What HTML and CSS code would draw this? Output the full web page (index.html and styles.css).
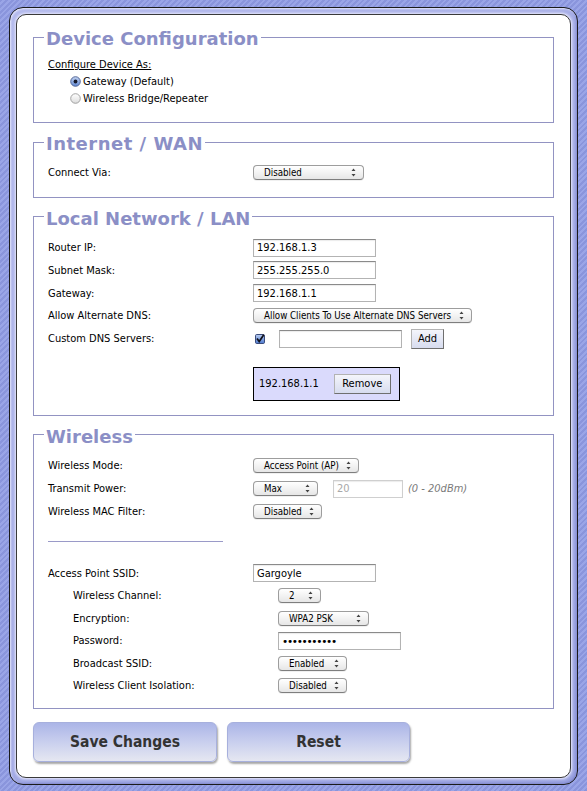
FILE: index.html
```html
<!DOCTYPE html>
<html>
<head>
<meta charset="utf-8">
<title>Gargoyle Settings</title>
<link rel="stylesheet" href="styles.css">
</head>
<body>
<svg class="defs" width="0" height="0" aria-hidden="true">
  <defs>
    <linearGradient id="radioOn" x1="0" y1="0" x2="0" y2="1">
      <stop offset="0" stop-color="#c4d4f2"/>
      <stop offset="1" stop-color="#5f87d2"/>
    </linearGradient>
    <linearGradient id="radioOff" x1="0" y1="0" x2="0" y2="1">
      <stop offset="0" stop-color="#ffffff"/>
      <stop offset="1" stop-color="#dcdcdc"/>
    </linearGradient>
    <linearGradient id="checkOn" x1="0" y1="0" x2="0" y2="1">
      <stop offset="0" stop-color="#b9cdf1"/>
      <stop offset="1" stop-color="#4f7bd0"/>
    </linearGradient>
    <symbol id="arrows" viewBox="0 0 5 9">
      <path d="M2.5 0.5 L4.5 3 H0.5 Z M0.5 6 H4.5 L2.5 8.5 Z" fill="#444"/>
    </symbol>
  </defs>
</svg>
<div class="frame">
  <div class="panel">

    <fieldset class="fs">
      <legend>Device Configuration</legend>
      <div class="fs-body body-device">
        <div class="sub-heading">Configure Device As:</div>
        <div class="radio-row">
          <svg class="radio" viewBox="0 0 11 11"><circle cx="5.5" cy="5.5" r="4.8" fill="url(#radioOn)" stroke="#4b5e8e" stroke-width="0.9"/><circle cx="5.5" cy="5.5" r="1.9" fill="#15192a"/></svg>
          <span>Gateway (Default)</span>
        </div>
        <div class="radio-row">
          <svg class="radio" viewBox="0 0 11 11"><circle cx="5.5" cy="5.5" r="4.8" fill="url(#radioOff)" stroke="#9a9a9a" stroke-width="0.9"/></svg>
          <span>Wireless Bridge/Repeater</span>
        </div>
      </div>
    </fieldset>

    <fieldset class="fs">
      <legend class="legend-wide">Internet / WAN</legend>
      <div class="fs-body body-wan">
        <div class="row">
          <span class="label">Connect Via:</span>
          <span class="sel w-wan"><span>Disabled</span><svg class="arr"><use href="#arrows"/></svg></span>
        </div>
      </div>
    </fieldset>

    <fieldset class="fs">
      <legend>Local Network / LAN</legend>
      <div class="fs-body body-lan">
        <div class="row">
          <span class="label">Router IP:</span>
          <input class="txt" type="text" value="192.168.1.3">
        </div>
        <div class="row">
          <span class="label">Subnet Mask:</span>
          <input class="txt" type="text" value="255.255.255.0">
        </div>
        <div class="row">
          <span class="label">Gateway:</span>
          <input class="txt" type="text" value="192.168.1.1">
        </div>
        <div class="row">
          <span class="label">Allow Alternate DNS:</span>
          <span class="sel w-dns"><span>Allow Clients To Use Alternate DNS Servers</span><svg class="arr"><use href="#arrows"/></svg></span>
        </div>
        <div class="row">
          <span class="label">Custom DNS Servers:</span>
          <span class="dns-ctrl">
            <svg class="check" viewBox="0 0 10 10"><rect x="0.5" y="0.5" width="9" height="9" rx="1.2" fill="url(#checkOn)" stroke="#3b4c7c"/><path d="M2 4.6 L4.2 7.6 L8.8 0.8" stroke="#101018" stroke-width="1.7" fill="none"/></svg>
            <input class="txt dns-input" type="text" value="">
            <button class="btn-small btn-add" type="button">Add</button>
          </span>
        </div>
        <div class="dns-list">
          <span>192.168.1.1</span>
          <button class="btn-small btn-remove" type="button">Remove</button>
        </div>
      </div>
    </fieldset>

    <fieldset class="fs fs-last">
      <legend>Wireless</legend>
      <div class="fs-body body-wifi">
        <div class="row">
          <span class="label">Wireless Mode:</span>
          <span class="sel w-mode"><span>Access Point (AP)</span><svg class="arr"><use href="#arrows"/></svg></span>
        </div>
        <div class="row">
          <span class="label">Transmit Power:</span>
          <span class="sel w-max"><span>Max</span><svg class="arr"><use href="#arrows"/></svg></span>
          <input class="txt txt-power" type="text" value="20" disabled>
          <em class="hint">(0 - 20dBm)</em>
        </div>
        <div class="row">
          <span class="label">Wireless MAC Filter:</span>
          <span class="sel w-mac"><span>Disabled</span><svg class="arr"><use href="#arrows"/></svg></span>
        </div>
        <div class="divider"></div>
        <div class="row row-ap">
          <span class="label">Access Point SSID:</span>
          <input class="txt" type="text" value="Gargoyle">
        </div>
        <div class="row row-ap sub">
          <span class="label">Wireless Channel:</span>
          <span class="sel w-ch"><span>2</span><svg class="arr"><use href="#arrows"/></svg></span>
        </div>
        <div class="row row-ap sub">
          <span class="label">Encryption:</span>
          <span class="sel w-enc"><span>WPA2 PSK</span><svg class="arr"><use href="#arrows"/></svg></span>
        </div>
        <div class="row row-ap sub">
          <span class="label">Password:</span>
          <input class="txt txt-pass" type="password" value="xxxxxxxxxxx">
        </div>
        <div class="row row-ap sub">
          <span class="label">Broadcast SSID:</span>
          <span class="sel w-en"><span>Enabled</span><svg class="arr"><use href="#arrows"/></svg></span>
        </div>
        <div class="row row-ap sub">
          <span class="label">Wireless Client Isolation:</span>
          <span class="sel w-en"><span>Disabled</span><svg class="arr"><use href="#arrows"/></svg></span>
        </div>
      </div>
    </fieldset>

    <div class="actions">
      <button class="big-btn btn-save" type="button">Save Changes</button>
      <button class="big-btn btn-reset" type="button">Reset</button>
    </div>

  </div>
</div>
</body>
</html>
```

FILE: styles.css
```css
* {
  box-sizing: border-box;
}

html,
body {
  margin: 0;
}

body {
  height: 791px;
  padding: 7px 9px 6px;
  background: repeating-linear-gradient(135deg, #8a95dc 0px, #8a95dc 2px, #9aa5e7 2px, #9aa5e7 4px);
  font-family: "DejaVu Sans Condensed", "DejaVu Sans", sans-serif;
  font-stretch: condensed;
  font-size: 11px;
  color: #000;
  overflow: hidden;
}

.defs {
  position: absolute;
  width: 0;
  height: 0;
}

.frame {
  display: flex;
  height: 778px;
  padding: 6px;
  border: 1px solid #1b1b1b;
  border-radius: 14px;
  background: linear-gradient(135deg, #b3b9ec, #a2a9e4 60%, #9aa2e0);
  box-shadow: inset 1px 1px 2px #e6e8fc, inset -1px -1px 2px #7c84cb;
}

.panel {
  flex: 1;
  padding: 10px 16px 0;
  border: 1px solid #3a3a3a;
  border-radius: 10px;
  background: #fff;
  box-shadow: 0 0 0 1px #d4d7f6, 0 0 2px 2px rgba(212, 215, 246, 0.7);
}

/* fieldsets */
.fs {
  min-width: 0;
  margin: 0 0 7px;
  padding: 0;
  border: 1px solid #9293c2;
}

.fs-last {
  margin-bottom: 0;
}

.fs legend {
  margin-left: 10px;
  padding: 4px 2px 0;
  font-family: "DejaVu Sans", sans-serif;
  font-stretch: normal;
  font-weight: bold;
  font-size: 18px;
  line-height: 20px;
  color: #8b8fc6;
}

.fs legend.legend-wide {
  letter-spacing: 0.5px;
}

.fs-body {
  padding-left: 14px;
  padding-right: 14px;
}

.body-device {
  padding-top: 7px;
  padding-bottom: 15px;
}

.body-wan {
  padding-top: 7.5px;
  padding-bottom: 12.5px;
}

.body-lan {
  padding-top: 7.5px;
  padding-bottom: 14px;
}

.body-wifi {
  padding-top: 7.75px;
  padding-bottom: 11.5px;
}

.sub-heading {
  height: 17px;
  line-height: 17px;
  text-decoration: underline;
}

.radio-row {
  display: flex;
  align-items: center;
  height: 17px;
  padding-left: 22px;
}

.radio {
  width: 11px;
  height: 11px;
  margin-right: 2px;
  flex: none;
}

.row {
  display: flex;
  align-items: center;
  height: 22.75px;
}

.row-ap {
  height: 22.45px;
}

.sub {
  padding-left: 25px;
}

.label {
  flex: none;
  width: 205px;
}

/* mac style popups */
.sel {
  display: inline-flex;
  align-items: center;
  justify-content: space-between;
  flex: none;
  height: 15px;
  padding: 0 7px 0 10px;
  border: 1px solid #9d9d9d;
  border-bottom-color: #7e7e7e;
  border-radius: 4px;
  background: linear-gradient(#ffffff, #f3f3f3 50%, #e6e6e6);
  box-shadow: 0 1px 0 rgba(0, 0, 0, 0.06);
  font-size: 9.7px;
  line-height: 13px;
  white-space: nowrap;
  color: #000;
}

.arr {
  width: 5px;
  height: 9px;
  flex: none;
}

.w-wan { width: 111px; }
.w-dns { width: 219px; }
.w-mode { width: 106px; }
.w-max { width: 65px; }
.w-mac { width: 69px; }
.w-ch { width: 43px; }
.w-enc { width: 91px; }
.w-en { width: 69px; }

/* text fields */
.txt {
  flex: none;
  width: 123px;
  height: 18px;
  margin: 0;
  padding: 0 3px;
  border: 1px solid #b3b3b3;
  border-top-color: #8a8a8a;
  background: #fff;
  box-shadow: inset 0 1px 1px rgba(0, 0, 0, 0.08);
  font-family: "DejaVu Sans Condensed", "DejaVu Sans", sans-serif;
  font-stretch: condensed;
  font-size: 11px;
  color: #000;
  outline: none;
}

.txt-power {
  width: 70px;
  margin-left: 15px;
  border-color: #cfcfcf;
  color: #a8a8a8;
}

.txt-pass {
  font-family: "DejaVu Sans", sans-serif;
  font-stretch: normal;
  font-size: 10.5px;
  letter-spacing: -1.3px;
}

.hint {
  margin-left: 5px;
  font-style: italic;
  color: #7a7a7a;
}

.dns-ctrl {
  display: flex;
  align-items: center;
}

.check {
  width: 10px;
  height: 10px;
  margin-left: 2px;
  flex: none;
}

.dns-input {
  margin-left: 14px;
}

.btn-small {
  height: 20px;
  margin: 0;
  padding: 0;
  border: 1px solid;
  border-color: #b3b3b3 #6f6f6f #6f6f6f #b3b3b3;
  background: linear-gradient(#f4f5fb, #d7dcef);
  font-family: "DejaVu Sans Condensed", "DejaVu Sans", sans-serif;
  font-stretch: condensed;
  font-size: 11px;
  color: #000;
}

.btn-add {
  width: 33px;
  margin-left: 9px;
}

.btn-remove {
  width: 57px;
}

.dns-list {
  display: flex;
  align-items: center;
  gap: 15px;
  width: 147px;
  height: 34px;
  margin: 16.75px 0 0 205px;
  padding-left: 5px;
  border: 1px solid #000;
  background: #dadafc;
}

.divider {
  width: 175px;
  height: 1px;
  margin: 17.75px 0 20.75px;
  background: #9a9ac8;
}

/* bottom buttons */
.actions {
  display: flex;
  gap: 10px;
  margin-top: 13px;
}

.big-btn {
  width: 184px;
  height: 40px;
  margin: 0;
  padding: 0;
  border: 1px solid #a7b0dd;
  border-radius: 6px;
  background: linear-gradient(#abb5e7, #c9cfee 50%, #e5e7f1);
  box-shadow: 1px 2px 2px rgba(0, 0, 0, 0.35);
  font-family: "DejaVu Sans Condensed", "DejaVu Sans", sans-serif;
  font-stretch: condensed;
  font-weight: bold;
  font-size: 15.5px;
  color: #333;
}

.btn-reset {
  width: 183px;
}
```
